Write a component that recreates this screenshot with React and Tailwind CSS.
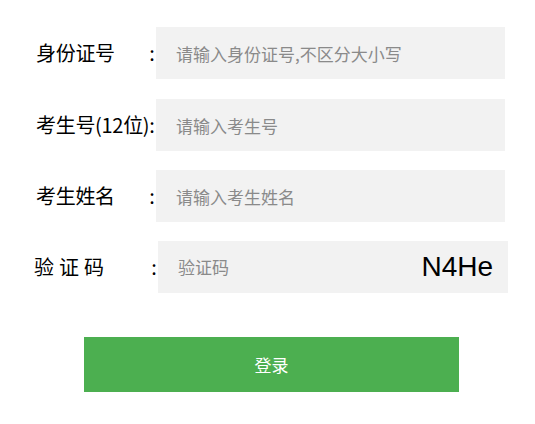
const ROWS = [
  { label: '身份证号', colon: true, placeholder: '请输入身份证号,不区分大小写', mt: '' },
  { label: '考生号(12位):', colon: false, placeholder: '请输入考生号', mt: 'mt-[20px] pl-[1px]' },
  { label: '考生姓名', colon: true, placeholder: '请输入考生姓名', mt: 'mt-[19px]' },
]

const font = { fontFamily: '"Noto Sans CJK SC", "Noto Sans", sans-serif' }

function Row({ label, colon, placeholder, mt }) {
  return (
    <div className={`flex items-center pl-[36px] ${mt}`}>
      <div className="flex w-[120px] items-center justify-between whitespace-nowrap text-[20px] tracking-[-0.3px] text-black">
        <span>{label}</span>
        {colon && <span className="w-[8px] text-center">:</span>}
      </div>
      <input
        placeholder={placeholder}
        className="h-[52px] w-[349px] bg-[#f2f2f2] pl-[20px] text-[17px] text-[#333] outline-none placeholder:text-[#8a8a8a]"
      />
    </div>
  )
}

export default function App() {
  return (
    <div className="min-h-screen bg-white pt-[27px]" style={font}>
      <div className="flex flex-col">
        {ROWS.map((r) => (
          <Row key={r.label} {...r} />
        ))}
        <div className="mt-[19px] flex items-center pl-[34px]">
          <div className="flex w-[124px] items-center justify-between text-[20px] text-black">
            <span className="tracking-[5px]">验证码</span>
            <span className="w-[8px] text-center">:</span>
          </div>
          <div className="flex h-[52px] w-[350px] items-center justify-between bg-[#f2f2f2] pl-[20px] pr-[15px]">
            <input
              placeholder="验证码"
              className="w-[150px] bg-transparent text-[17px] text-[#333] outline-none placeholder:text-[#8a8a8a]"
            />
            <span className="text-[28px] text-black" style={{ fontFamily: '"Liberation Sans", Arial, sans-serif' }}>
              N4He
            </span>
          </div>
        </div>
      </div>
      <div className="pl-[84px] pt-[44px]">
        <button className="h-[55px] w-[375px] bg-[#4caf50] text-[17px] text-white">登录</button>
      </div>
    </div>
  )
}
